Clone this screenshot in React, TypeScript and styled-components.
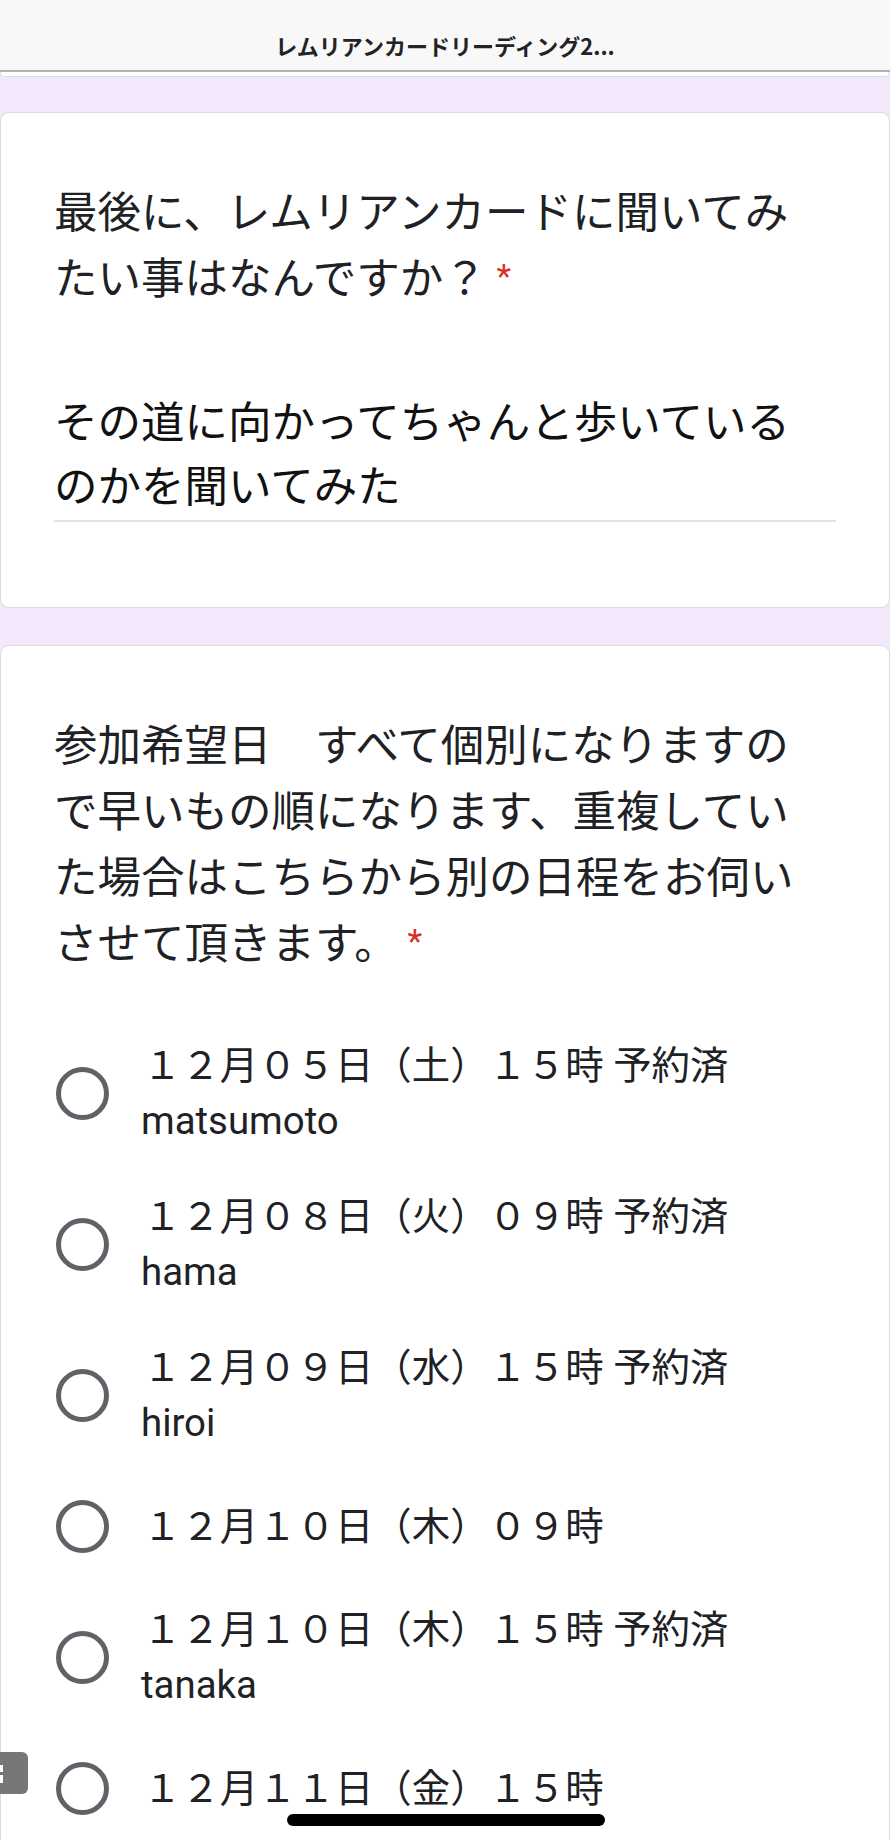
import React from "react";
import styled, { createGlobalStyle } from "styled-components";

const GlobalStyle = createGlobalStyle`
  html, body {
    margin: 0;
    padding: 0;
    background: #f3e7fb;
  }
  body {
    font-family: "Noto Sans CJK JP", "Noto Sans", sans-serif;
    -webkit-font-smoothing: antialiased;
  }
`;

const Page = styled.div`
  position: relative;
  width: 890px;
  height: 1840px;
  overflow: hidden;
  background: #f3e7fb;
  display: flex;
  flex-direction: column;
`;

const Header = styled.header`
  box-sizing: border-box;
  height: 72px;
  padding-top: 20px;
  display: flex;
  align-items: center;
  justify-content: center;
  background: #f8f8f8;
  border-bottom: 2px solid #b3b3b3;
  flex-shrink: 0;
`;

const HeaderTitle = styled.h1`
  margin: 0;
  font-family: "Noto Sans CJK JP", sans-serif;
  font-size: 22px;
  font-weight: 700;
  color: #232323;
  line-height: 1;
`;

const PrevCardEdge = styled.div`
  box-sizing: border-box;
  height: 5px;
  background: #ffffff;
  border: 1px solid #dadce0;
  border-top: none;
  border-radius: 0 0 6px 6px;
  flex-shrink: 0;
`;

const Cards = styled.main`
  display: flex;
  flex-direction: column;
  gap: 37px;
  padding-top: 35px;
`;

const Card = styled.section<{ $padBottom: number }>`
  box-sizing: border-box;
  background: #ffffff;
  border: 1px solid #dadce0;
  border-radius: 9px;
  padding: 64px 53px ${(p) => p.$padBottom}px 53px;
  flex-shrink: 0;
`;

const QuestionTitle = styled.div`
  padding-right: 26px;
  font-family: "Noto Sans CJK JP", sans-serif;
  font-size: 43.5px;
  line-height: 66px;
  color: #202124;
  font-weight: 400;
`;

const Required = styled.span`
  font-family: "Roboto", "Liberation Sans", sans-serif;
  color: #d93025;
  font-size: 34px;
  vertical-align: 6px;
`;

const Answer = styled.div`
  margin-top: 79px;
  padding: 0 26px 4px 0;
  border-bottom: 2px solid #e2e2e2;
  font-family: "Noto Sans CJK JP", sans-serif;
  font-size: 43.5px;
  line-height: 64px;
  color: #111111;
`;

const OptionList = styled.div`
  margin-top: 64px;
  display: flex;
  flex-direction: column;
  gap: 41px;
`;

const OptionRow = styled.label`
  display: flex;
  align-items: center;
  gap: 34px;
  min-height: 70px;
  margin-left: 2px;
`;

const Radio = styled.span`
  box-sizing: border-box;
  width: 53px;
  height: 53px;
  border-radius: 50%;
  border: 5px solid #5f6368;
  flex-shrink: 0;
`;

const OptionText = styled.div`
  font-family: "Roboto", "Noto Sans CJK JP", sans-serif;
  font-size: 38.4px;
  line-height: 55px;
  color: #202124;
`;

const Line = styled.span<{ $shift?: number }>`
  display: block;
  white-space: nowrap;
  margin-left: ${(p) => p.$shift ?? 0}px;
`;

const HomeIndicator = styled.div`
  position: absolute;
  left: 287px;
  top: 1814px;
  width: 318px;
  height: 12px;
  border-radius: 6px;
  background: #000000;
`;

const SideTab = styled.div`
  position: absolute;
  left: -14px;
  top: 1752px;
  width: 42px;
  height: 42px;
  border-radius: 6px;
  background: #777777;
  overflow: hidden;
`;

const options: { main: string; name?: string }[] = [
  { main: "１２月０５日（土）１５時 予約済", name: "matsumoto" },
  { main: "１２月０８日（火）０９時 予約済", name: "hama" },
  { main: "１２月０９日（水）１５時 予約済", name: "hiroi" },
  { main: "１２月１０日（木）０９時" },
  { main: "１２月１０日（木）１５時 予約済", name: "tanaka" },
  { main: "１２月１１日（金）１５時" },
];

export default function App() {
  return (
    <>
      <GlobalStyle />
      <Page>
        <Header>
          <HeaderTitle>レムリアンカードリーディング2...</HeaderTitle>
        </Header>
        <PrevCardEdge />
        <Cards>
          <Card $padBottom={85}>
            <QuestionTitle>
              最後に、レムリアンカードに聞いてみたい事はなんですか？ <Required>*</Required>
            </QuestionTitle>
            <Answer>その道に向かってちゃんと歩いているのかを聞いてみた</Answer>
          </Card>
          <Card $padBottom={80}>
            <QuestionTitle>
              参加希望日　すべて個別になりますので早いもの順になります、重複していた場合はこちらから別の日程をお伺いさせて頂きます。 <Required>*</Required>
            </QuestionTitle>
            <OptionList>
              {options.map((o, i) => (
                <OptionRow key={i}>
                  <Radio />
                  <OptionText>
                    <Line>{o.main}</Line>
                    {o.name && <Line $shift={-2}>{o.name}</Line>}
                  </OptionText>
                </OptionRow>
              ))}
            </OptionList>
          </Card>
        </Cards>
        <SideTab>
          <svg width="42" height="42" viewBox="0 0 42 42">
            <rect x="14" y="13" width="3" height="7" fill="#ffffff" />
            <rect x="14" y="23" width="3" height="8" fill="#ffffff" />
          </svg>
        </SideTab>
        <HomeIndicator />
      </Page>
    </>
  );
}
